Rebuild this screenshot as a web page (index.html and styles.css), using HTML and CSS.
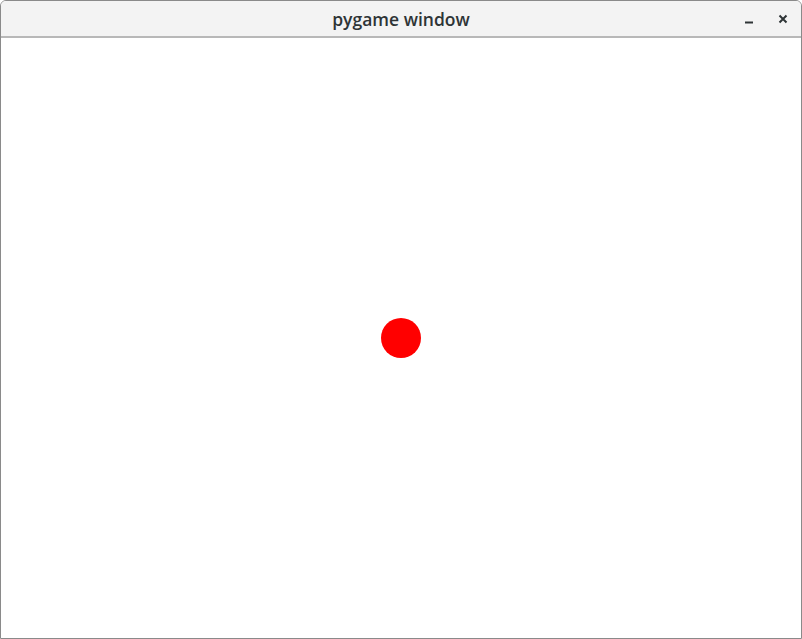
FILE: index.html
```html
<!DOCTYPE html>
<html>
<head>
<meta charset="utf-8">
<link rel="stylesheet" href="styles.css">
</head>
<body>
<div class="window">
  <div class="titlebar">
    <div class="spacer"></div>
    <div class="title">pygame window</div>
    <div class="controls">
      <svg class="btn" width="8" height="8" viewBox="0 0 8 8"><rect x="0" y="6.5" width="8" height="2" fill="#2e3436"/></svg>
      <svg class="btn" width="8" height="8" viewBox="0 0 8 8"><path d="M0.5 0.5 L7.5 7.5 M7.5 0.5 L0.5 7.5" stroke="#2e3436" stroke-width="2"/></svg>
    </div>
  </div>
  <div class="canvas">
    <div class="ball"></div>
  </div>
</div>
</body>
</html>
```
FILE: styles.css
```css
html, body {
  margin: 0;
  padding: 0;
  background: #ffffff;
}
.window {
  width: 800px;
  border: 1px solid #8a8a8a;
  border-radius: 6px 6px 0 0;
  background: #ffffff;
  overflow: hidden;
}
.titlebar {
  height: 35px;
  background: #f3f3f3;
  border-bottom: 2px solid #b8b8b8;
  display: flex;
  align-items: center;
}
.spacer {
  width: 90px;
}
.title {
  flex: 1;
  text-align: center;
  font-family: "Open Sans", "Noto Sans", sans-serif;
  font-weight: 600;
  font-size: 17.5px;
  line-height: 20px;
  color: #2e3436;
  margin-top: 1px;
}
.controls {
  width: 90px;
  display: flex;
  justify-content: flex-end;
  align-items: center;
  gap: 26px;
  padding-right: 14px;
  margin-top: 1px;
  box-sizing: border-box;
}
.btn {
  display: block;
  overflow: visible;
}
.canvas {
  height: 600px;
  position: relative;
  background: #ffffff;
}
.ball {
  position: absolute;
  left: 380px;
  top: 280px;
  width: 40px;
  height: 40px;
  border-radius: 50%;
  background: #ff0000;
}
```
